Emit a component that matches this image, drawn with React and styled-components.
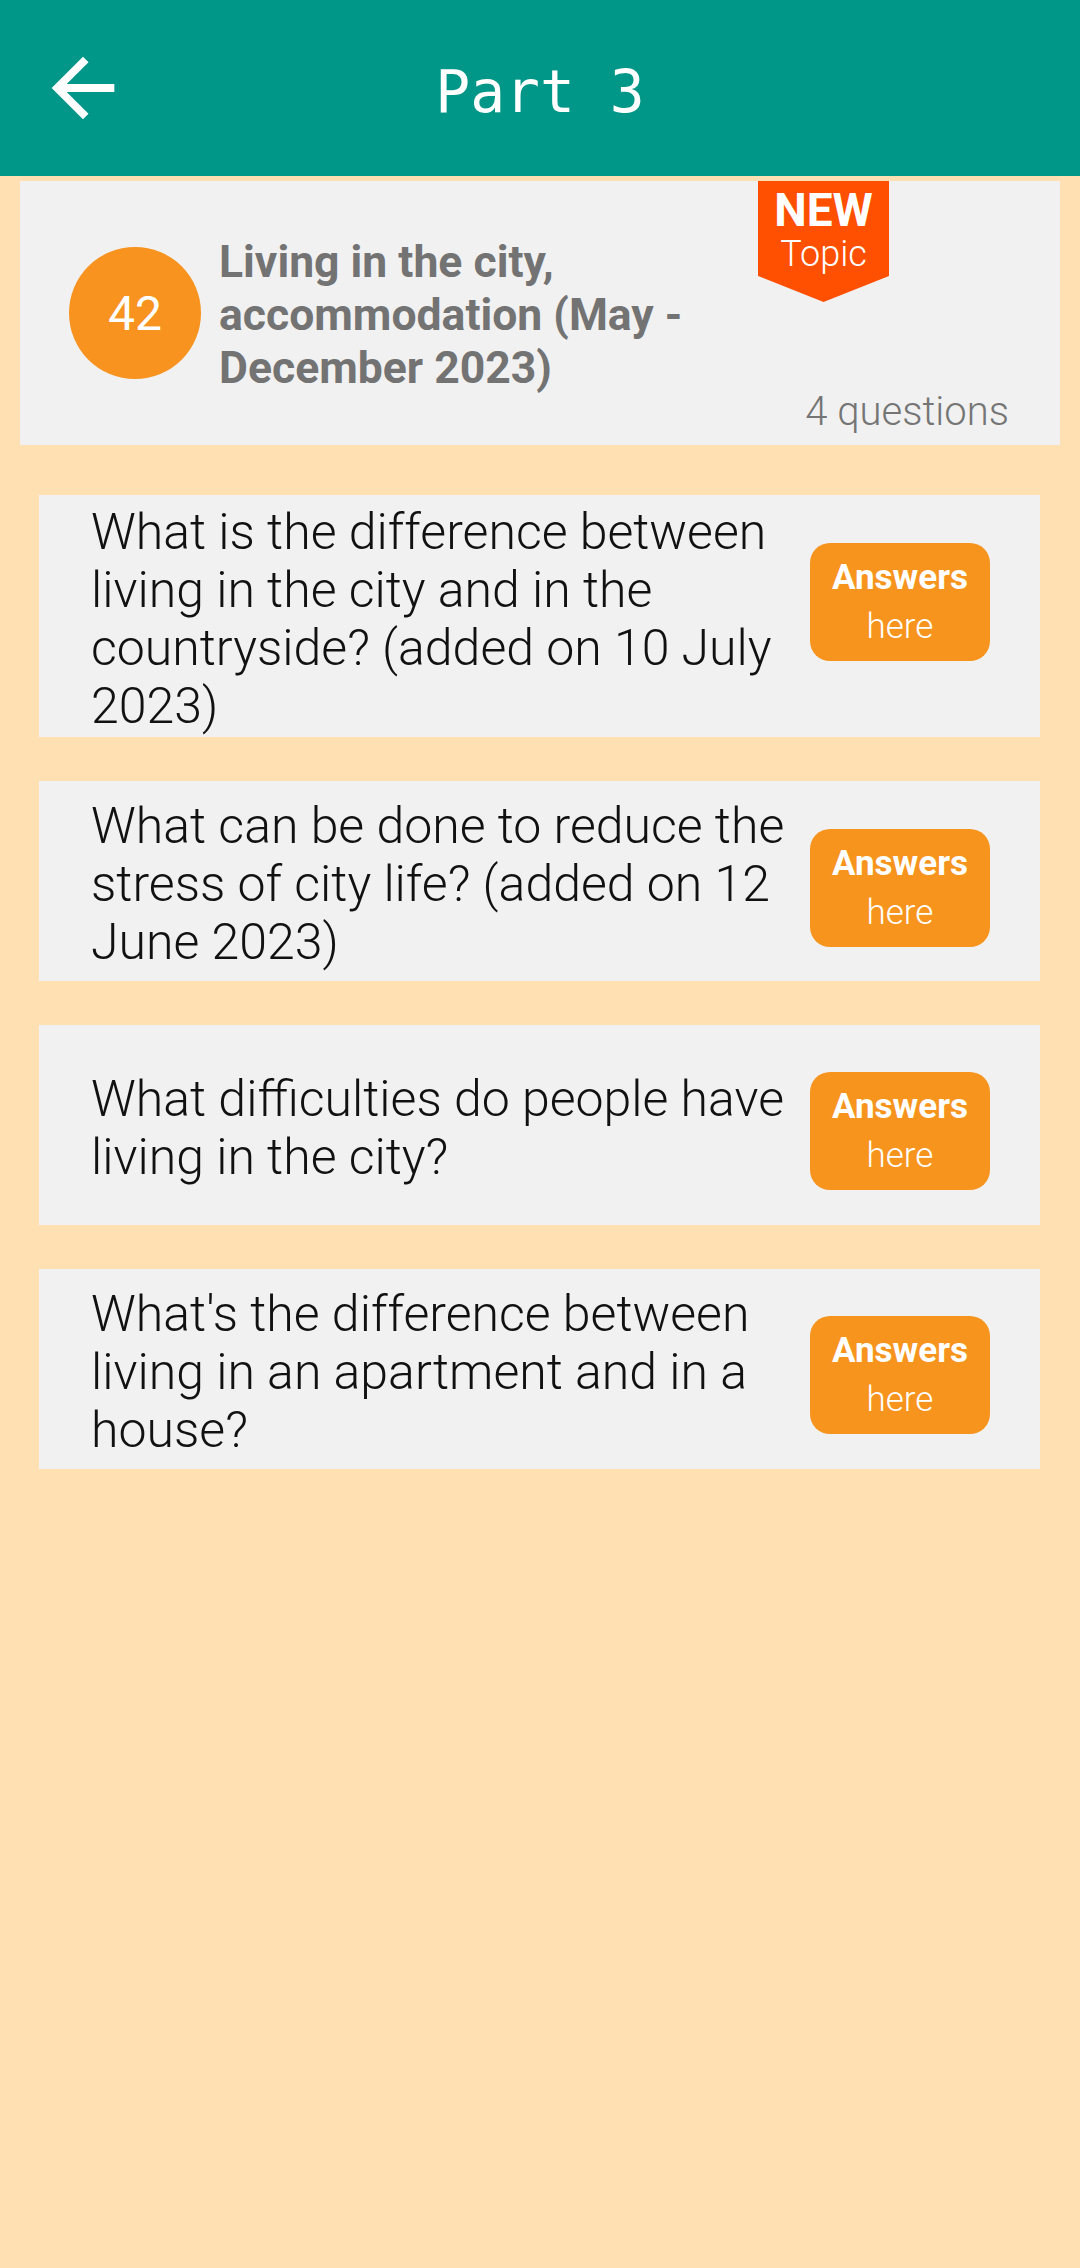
import React from "react";
import styled, { createGlobalStyle } from "styled-components";

const Global = createGlobalStyle`
  html, body { margin: 0; padding: 0; }
  body {
    background: #ffe0b2;
    font-family: Roboto, "Noto Sans", "Liberation Sans", sans-serif;
    min-height: 2268px;
  }
`;

const Page = styled.div`
  width: 1080px;
  min-height: 2268px;
  background: #ffe0b2;
`;

const Toolbar = styled.header`
  height: 176px;
  background: #009688;
  display: grid;
  grid-template-columns: 1fr auto 1fr;
  align-items: center;
  padding: 0 36px;
  box-sizing: border-box;
`;

const BackButton = styled.button`
  justify-self: start;
  width: 94px;
  height: 94px;
  padding: 0;
  border: 0;
  background: transparent;
  display: flex;
  cursor: pointer;
  svg { width: 94px; height: 94px; fill: #fff; }
`;

const Title = styled.h1`
  margin: 0;
  padding-top: 8px;
  color: #fff;
  font-family: "DejaVu Sans Mono", "Liberation Mono", monospace;
  font-weight: 400;
  font-size: 58px;
  letter-spacing: 0;
`;

const TopicCard = styled.section`
  margin: 5px 20px 0;
  height: 264px;
  background: #f1f1f1;
  display: grid;
  grid-template-columns: 132px 1fr 251px;
  column-gap: 18px;
  align-items: center;
  padding: 0 51px 0 49px;
  box-sizing: border-box;
`;

const NumberBadge = styled.div`
  width: 132px;
  height: 132px;
  border-radius: 50%;
  background: #f7931e;
  color: #fff;
  font-size: 48px;
  display: flex;
  align-items: center;
  justify-content: center;
`;

const TopicTitle = styled.h2`
  margin: 0;
  color: #737373;
  font-weight: 700;
  font-size: 44.5px;
  line-height: 53px;
  padding-top: 4px;
`;

const Aside = styled.div`
  align-self: stretch;
  display: flex;
  flex-direction: column;
  justify-content: space-between;
  align-items: flex-start;
  padding-bottom: 10px;
  box-sizing: border-box;
`;

const Ribbon = styled.div`
  width: 131px;
  height: 121px;
  background: #ff4f00;
  clip-path: polygon(0 0, 100% 0, 100% 78.5%, 50% 100%, 0 78.5%);
  color: #fff;
  display: flex;
  flex-direction: column;
  align-items: center;
  padding-top: 4px;
  box-sizing: border-box;
`;

const RibbonStrong = styled.span`
  font-weight: 700;
  font-size: 46px;
  line-height: 50px;
`;

const RibbonSub = styled.span`
  font-weight: 300;
  font-size: 36px;
  line-height: 38px;
`;

const Count = styled.span`
  align-self: flex-end;
  color: #757575;
  font-weight: 300;
  font-size: 40px;
  line-height: 46px;
`;

const List = styled.div`
  margin-top: 50px;
  padding: 0 40px 0 39px;
  display: flex;
  flex-direction: column;
  gap: 44px;
`;

const QuestionCard = styled.article`
  background: #f1f1f1;
  min-height: 200px;
  display: flex;
  align-items: center;
  gap: 14px;
  padding: 8px 50px 2px 52px;
  box-sizing: border-box;
`;

const QuestionText = styled.p`
  flex: 1;
  margin: 0;
  color: #111;
  font-weight: 300;
  font-size: 50px;
  line-height: 58px;
`;

const AnswerButton = styled.button`
  flex-shrink: 0;
  width: 180px;
  height: 118px;
  border: 0;
  border-radius: 20px;
  background: #f7941d;
  color: #fff;
  font-family: inherit;
  display: flex;
  flex-direction: column;
  align-items: center;
  justify-content: center;
  margin-top: ${(p) => p.$offset}px;
  cursor: pointer;
`;

const AnswerStrong = styled.span`
  font-weight: 700;
  font-size: 35px;
  line-height: 49px;
`;

const AnswerSub = styled.span`
  font-weight: 300;
  font-size: 35px;
  line-height: 49px;
`;

const questions = [
  {
    text: "What is the difference between living in the city and in the countryside? (added on 10 July 2023)",
    offset: -34,
  },
  {
    text: "What can be done to reduce the stress of city life? (added on 12 June 2023)",
    offset: 8,
  },
  { text: "What difficulties do people have living in the city?", offset: 6 },
  {
    text: "What's the difference between living in an apartment and in a house?",
    offset: 6,
  },
];

export default function App() {
  return (
    <Page>
      <Global />
      <Toolbar>
        <BackButton aria-label="Back">
          <svg viewBox="0 0 24 24">
            <path d="M20 11H7.83l5.59-5.59L12 4l-8 8 8 8 1.41-1.41L7.83 13H20v-2z" />
          </svg>
        </BackButton>
        <Title>Part 3</Title>
        <span />
      </Toolbar>

      <TopicCard>
        <NumberBadge>42</NumberBadge>
        <TopicTitle>Living in the city, accommodation (May - December 2023)</TopicTitle>
        <Aside>
          <Ribbon>
            <RibbonStrong>NEW</RibbonStrong>
            <RibbonSub>Topic</RibbonSub>
          </Ribbon>
          <Count>4 questions</Count>
        </Aside>
      </TopicCard>

      <List>
        {questions.map((q) => (
          <QuestionCard key={q.text}>
            <QuestionText>{q.text}</QuestionText>
            <AnswerButton $offset={q.offset}>
              <AnswerStrong>Answers</AnswerStrong>
              <AnswerSub>here</AnswerSub>
            </AnswerButton>
          </QuestionCard>
        ))}
      </List>
    </Page>
  );
}
